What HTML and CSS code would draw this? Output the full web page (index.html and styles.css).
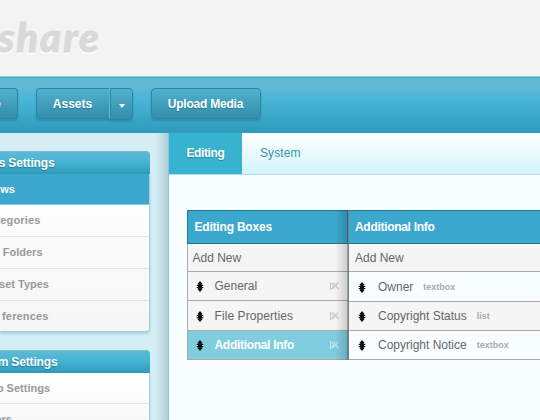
FILE: index.html
```
<!DOCTYPE html>
<html lang="en">
<head>
<meta charset="utf-8">
<title>Editing</title>
<link rel="stylesheet" href="styles.css">
</head>
<body>
<svg class="defs" aria-hidden="true">
  <symbol id="move" viewBox="0 0 8 11"><path d="M4 0 6.8 3.2H5.8V4.1H7.3V5H6V6H7.3V6.9H5.8V7.8H6.8L4 11 1.2 7.8H2.2V6.9H.7V6H2V5H.7V4.1H2.2V3.2H1.2Z" fill="#111"/></symbol>
  <symbol id="remove" viewBox="0 0 9 8"><path d="M.5 0V8M1.5 1 4 4 1.5 7M8.3.5 2.5 7.2M3.3.5 8.5 7.2" fill="none" stroke="currentColor" stroke-width="1.1"/></symbol>
</svg>
<header class="brand"><span class="logo">share</span></header>
<nav class="nav">
  <div class="btn btn-first">e</div>
  <div class="split"><div class="btn btn-main"><span>Assets</span></div><div class="btn btn-arrow"><i class="caret"></i></div></div>
  <div class="btn btn-upload"><span>Upload Media</span></div>
</nav>
<div class="body">
  <aside class="sidebar">
    <section class="panel">
      <h2><span class="e55">s Settings</span></h2>
      <ul>
        <li class="active"><span class="e15">ws</span></li>
        <li><span class="e41">egories</span></li>
        <li><span class="e43">Folders</span></li>
        <li><span class="e50">set Types</span></li>
        <li><span class="e49">ferences</span></li>
      </ul>
    </section>
    <section class="panel second">
      <h2><span class="e58">m Settings</span></h2>
      <ul>
        <li><span class="e51">p Settings</span></li>
        <li><span class="e13">ers</span></li>
      </ul>
    </section>
  </aside>
  <main class="content">
    <div class="tabs"><div class="tab on">Editing</div><div class="tab">System</div></div>
    <div class="columns">
      <section class="col boxes">
        <h3><span>Editing Boxes</span></h3>
        <div class="row add"><span class="t-add">Add New</span></div>
        <div class="row"><svg class="move"><use href="#move"/></svg><span class="t-gen">General</span><svg class="remove"><use href="#remove"/></svg></div>
        <div class="row"><svg class="move"><use href="#move"/></svg><span class="t-file">File Properties</span><svg class="remove"><use href="#remove"/></svg></div>
        <div class="row selected"><svg class="move"><use href="#move"/></svg><span class="t-info">Additional Info</span><svg class="remove"><use href="#remove"/></svg></div>
      </section>
      <section class="col fields">
        <h3><span>Additional Info</span></h3>
        <div class="row add"><span class="t-add">Add New</span></div>
        <div class="row light tall"><svg class="move"><use href="#move"/></svg><span>Owner</span><small>textbox</small></div>
        <div class="row"><svg class="move"><use href="#move"/></svg><span>Copyright Status</span><small>list</small></div>
        <div class="row light"><svg class="move"><use href="#move"/></svg><span>Copyright Notice</span><small>textbox</small></div>
      </section>
    </div>
  </main>
</div>
</body>
</html>
```
FILE: styles.css
```
* { box-sizing: border-box; }
body { margin: 0; width: 540px; height: 420px; overflow: hidden; background: #f8feff; font: 12px "Liberation Sans", Arial, sans-serif; color: #666; white-space: nowrap; }
h2, h3, ul { margin: 0; padding: 0; list-style: none; font-size: 12px; }
.defs { display: none; }

.brand { height: 76px; background: #f3f3f3; padding-top: 15px; overflow: hidden; }
.logo { display: block; margin-left: -2px; font: italic 900 40px/44px Lato, sans-serif; letter-spacing: 2px; color: #d9d9d9; -webkit-text-stroke: 1px #d9d9d9; text-shadow: 0 2px 1px #fff; }

.nav { height: 57px; padding-top: 11px; display: flex; align-items: flex-start; border-top: 1px solid #83cfe0; background: linear-gradient(#5fb8d4 0, #61bad6 8px, #48b6d6 23px, #2f9abb 100%); box-shadow: inset 0 1px #48a5c0; }
.btn { height: 31px; display: flex; align-items: center; justify-content: center; border: 1px solid #2b87a1; border-radius: 4px; background: linear-gradient(#50b2cf, #328eaa); box-shadow: 0 2px 2px rgba(20,100,125,.35); color: #fff; font-weight: bold; text-shadow: 0 1px 1px #287a94; }
.btn-first { width: 18px; border-left: 0; border-radius: 0 4px 4px 0; justify-content: flex-end; padding-right: 16px; }
.split { display: flex; margin: 0 18px; }
.btn-main { width: 74px; padding-right: 1px; border-right-color: #70c3d9; border-radius: 4px 0 0 4px; }
.btn-arrow { width: 23px; height: 32px; border-radius: 0 4px 4px 0; }
.caret { border: 3px solid transparent; border-top: 4px solid #fff; border-bottom: 0; margin-top: 3px; }
.btn-upload { width: 110px; padding-right: 1px; letter-spacing: -.22px; }

.body { display: flex; height: 287px; }
.sidebar { width: 169px; padding-top: 18px; border-right: 1px solid #8dc3d0; background: linear-gradient(90deg, #d4eef5 155px, #c8e2e9 160px, #afcdd5 168px); }
.panel { width: 150px; }
.second { margin-top: 18px; }
.panel h2 { height: 23px; line-height: 22px; border-top: 1px solid #77bdd2; border-radius: 0 4px 0 0; background: linear-gradient(#60b9d4, #43b4d3 50%, #2f99b8); color: #fff; letter-spacing: -.15px; text-shadow: 0 1px 1px #287a94; }
.panel ul { border: solid #a3d0dc; border-width: 0 1px 1px 0; border-radius: 0 0 4px 0; background: linear-gradient(#fff, #f6f6f6); box-shadow: 0 2px 3px rgba(80,145,165,.3); overflow: hidden; }
.panel li { height: 32px; line-height: 31px; font-size: 11px; font-weight: bold; color: #999; border-bottom: 1px solid #e1e1e1; }
.panel li:nth-child(5) { height: 30px; border: 0; }
.panel li.active { height: 31px; background: #3ca8ce; color: #fff; border-color: #8ec9dc; }
.second li:first-child { height: 31px; line-height: 30px; }
.panel h2 span, .panel li span { display: flex; justify-content: flex-end; white-space: pre; }
.e13 { width: 12px; }
.e15 { width: 15px; }
.e41 { width: 40.5px; letter-spacing: .15px; }
.e43 { width: 42.5px; }
.e49 { width: 48.5px; letter-spacing: .15px; }
.e50 { width: 49px; }
.e51 { width: 50px; }
.e55 { width: 54.5px; }
.e58 { width: 57.5px; }

.content { flex: 1; min-width: 0; }
.tabs { display: flex; height: 42px; border-bottom: 1px solid #b7dce5; background: linear-gradient(#fff, #d3f4fb); }
.tab { padding: 0 18px; line-height: 40px; color: #3c91ae; letter-spacing: .1px; }
.tab.on { width: 73px; padding-left: 17.5px; background: #38b3cf; color: #fff; font-weight: bold; letter-spacing: -.4px; text-shadow: 0 1px 1px #2a859f; }

.columns { display: flex; margin: 35px 0 0 18px; }
.col { border-left: 1px solid #a9afb1; }
.boxes { width: 161px; position: relative; }
.boxes::after { content: ""; position: absolute; inset: 0 0 0 auto; width: 12px; border-right: 1px solid rgba(0,0,0,.35); background: linear-gradient(90deg, transparent, rgba(0,0,0,.16)); }
.fields { flex: 1; border-left-color: #777f82; }
.col h3 { height: 34px; line-height: 32px; padding-left: 7px; border: solid #24768f; border-width: 1px 0; background: #3ca8ce; color: #fff; }
.boxes h3 { margin-left: -1px; padding-left: 6.5px; border-left-width: 1px; letter-spacing: -.2px; }
.fields h3 { padding-left: 6px; letter-spacing: -.3px; }
.row { height: 29px; display: flex; align-items: center; border-bottom: 1px solid #aaa; background: #f5f5f5; padding: 0 9.5px 0 8px; }
.row.add { height: 28px; padding: 0 6px; }
.boxes .add { padding-left: 4.5px; }
.row.light { background: #f8feff; }
.row.tall { height: 30px; }
.boxes .row:nth-child(4) { height: 30px; }
.row.selected { background: #80cddf; color: #fff; font-weight: bold; }
.t-info { letter-spacing: -.3px; }
.t-file { letter-spacing: .08px; }
.fields .row:not(.add) { padding-left: 9px; }
.move { width: 8px; height: 11px; margin-right: 10.5px; flex: none; position: relative; top: .5px; }
.fields .move { margin-right: 12px; }
.remove { width: 9px; height: 8px; margin-left: auto; color: #c5c5c5; }
.selected .remove { color: #c5e8ef; }
small { margin-left: 10px; font-size: 9px; font-weight: bold; color: #aaa; }
```
